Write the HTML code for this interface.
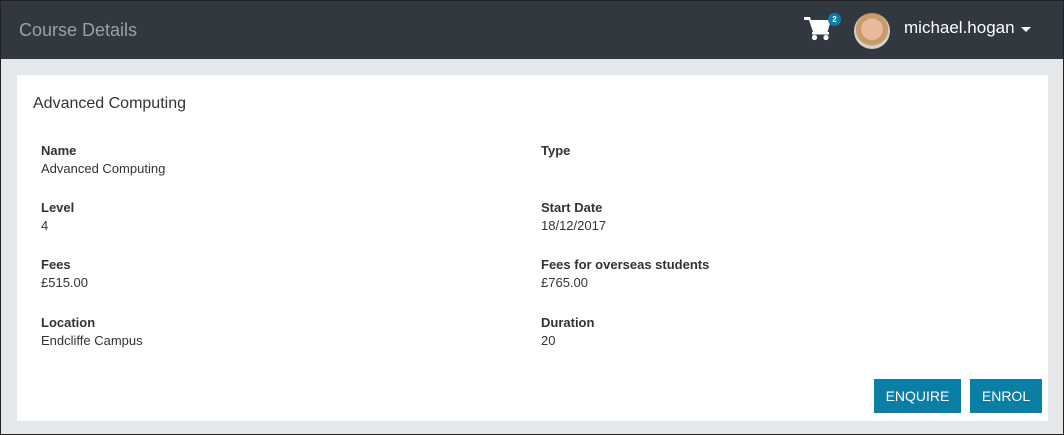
<!DOCTYPE html>
<html><head><style>
*{margin:0;padding:0;box-sizing:border-box}
body{width:1064px;height:435px;overflow:hidden;font-family:"Liberation Sans",sans-serif;background:#fff}
.frame{position:absolute;left:0;top:0;width:1064px;height:435px;border:1px solid #222;background:#e4e8eb}
.hdr{position:absolute;left:0;top:0;width:1062px;height:58px;background:#323840}
.title{position:absolute;left:18px;top:19px;font-size:18px;color:#9aa0a6}
.user{position:absolute;left:903px;top:17px;font-size:17px;color:#fff}
.caret{position:absolute;left:1020px;top:26px;width:0;height:0;border-left:5px solid transparent;border-right:5px solid transparent;border-top:5px solid #fff}
.av{position:absolute;left:853px;top:12px;width:36px;height:36px;border-radius:50%;background:radial-gradient(circle at 50% 45%,#e8b99a 0 40%,#c99a6a 41% 60%,#d9d0c0 61%)}
.badge{position:absolute;left:827px;top:12px;width:13px;height:13px;border-radius:50%;background:#0b7ea6;color:#fff;font-size:8px;text-align:center;line-height:13px;font-weight:bold}
.card{position:absolute;left:16px;top:74px;width:1031px;height:346px;background:#fff}
h1{position:absolute;left:16px;top:20px;font-size:16px;font-weight:normal;color:#333}
.f{position:absolute;font-size:13px;color:#333;line-height:18px}
.f b{display:block}
.btn{position:absolute;top:304px;height:34px;background:#0a7ea4;color:#fff;font-size:14px;text-align:center;line-height:34px}
</style></head><body>
<div class="frame">
<div class="hdr">
<div class="title">Course Details</div>
<svg style="position:absolute;left:803px;top:15px" width="28" height="25" viewBox="0 0 28 25"><path d="M0 1h6l1 3h20l-3.5 12H9L5 4H0z" fill="#fff"/><rect x="8" y="16" width="17" height="2.5" fill="#fff"/><circle cx="10.5" cy="21.5" r="2.6" fill="#fff"/><circle cx="22" cy="21.5" r="2.6" fill="#fff"/></svg>
<div class="badge">2</div>
<div class="av"></div>
<div class="user">michael.hogan</div>
<div class="caret"></div>
</div>
<div class="card">
<h1>Advanced Computing</h1>
<div class="f" style="left:24px;top:67px"><b>Name</b>Advanced Computing</div>
<div class="f" style="left:524px;top:67px"><b>Type</b></div>
<div class="f" style="left:24px;top:124px"><b>Level</b>4</div>
<div class="f" style="left:524px;top:124px"><b>Start Date</b>18/12/2017</div>
<div class="f" style="left:24px;top:181px"><b>Fees</b>£515.00</div>
<div class="f" style="left:524px;top:181px"><b>Fees for overseas students</b>£765.00</div>
<div class="f" style="left:24px;top:239px"><b>Location</b>Endcliffe Campus</div>
<div class="f" style="left:524px;top:239px"><b>Duration</b>20</div>
<div class="btn" style="left:857px;width:87px">ENQUIRE</div>
<div class="btn" style="left:953px;width:72px">ENROL</div>
</div>
</div>
</body></html>
